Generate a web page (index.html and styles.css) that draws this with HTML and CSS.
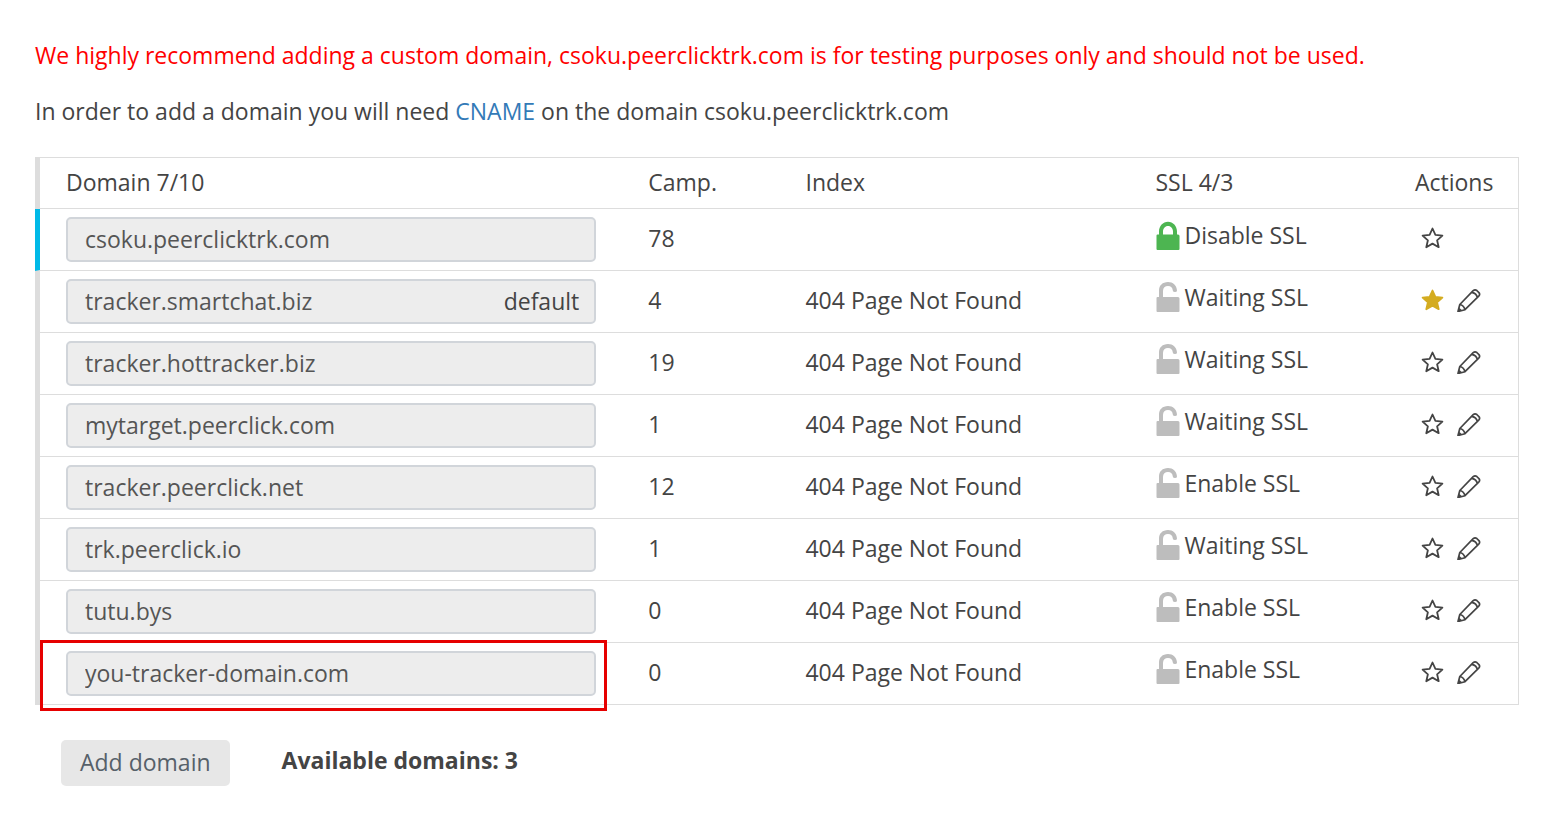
FILE: index.html
```html
<!DOCTYPE html>
<html lang="en">
<head>
<meta charset="utf-8">
<title>Domains</title>
<link rel="stylesheet" href="styles.css">
</head>
<body>
<svg class="sprite" aria-hidden="true">
  <symbol id="locked" viewBox="0 0 24 30"><path fill-rule="evenodd" d="M1.500 14.500H3V11.500C3 6 7 1.700 12 1.700S21 6 21 11.500v3h1q1.500 0 1.500 1.500V29q0 1-1 1h-21q-1 0-1-1V15.500q0-1 1-1zM7 14.500h10V11.500c0-3-2-5.500-5-5.500s-5 2.500-5 5.500z"/></symbol>
  <symbol id="unlocked" viewBox="0 0 24 30"><path d="M1.500 15H3V8.500C3 3.500 6.500 0 12 0c5 0 8.500 3 9 8.500q0 1.500-2 1.500t-2.200-1.500C16.500 5.500 15 4 12 4c-3 0-5 1.800-5 5v6h15q1.500 0 1.500 1.500V29q0 1-1 1h-21q-1 0-1-1V16q0-1 1-1z"/></symbol>
  <symbol id="star" viewBox="0 0 24 24"><path stroke-width="1.800" d="M11.500 2.500l2.900 6.400 7 .7-5.300 4.700 1.600 6.900L11.500 17.600l-6.200 3.600 1.600-6.900L1.600 9.600l7-.7z"/></symbol>
  <symbol id="pencil" viewBox="0 0 24 24"><path stroke-width="1.700" d="M1 23.500l1.800-7L16.200 2.700q1.800-1.700 3.600-.2l2.100 2.100q1.500 1.800-.2 3.600L8 21.700zM2.800 16.500q4.200 1 5.200 5.200M15 4.300q4.500 1 5.400 5.400M1.200 23l.8-2.500 2 2z"/></symbol>
</svg>
<main class="page">
  <p class="notice warning">We highly recommend adding a custom domain, csoku.peerclicktrk.com is for testing purposes only and should not be used.</p>
  <p class="notice">In order to add a domain you will need <a href="#cname">CNAME</a> on the domain csoku.peerclicktrk.com</p>
  <table class="domains">
    <colgroup><col class="col-domain"><col class="col-camp"><col class="col-index"><col class="col-ssl"><col></colgroup>
    <thead>
      <tr><th>Domain 7/10</th><th>Camp.</th><th>Index</th><th>SSL 4/3</th><th>Actions</th></tr>
    </thead>
    <tbody id="rows"></tbody>
  </table>
  <footer class="footer">
    <button class="add" type="button">Add domain</button>
    <strong>Available domains: 3</strong>
  </footer>
</main>
<script src="domains.js"></script>
</body>
</html>
```
FILE: styles.css
```css
* { box-sizing: border-box; }
body {
  margin: 0;
  background: #fff;
  color: #444;
  font: 23px/32px "Open Sans", "Noto Sans", sans-serif;
}
button, input { font: inherit; }
.sprite { display: none; }
.page { padding: 39px 28px 40px 35px; }
.notice { margin: 0 0 24px; }
.warning { color: #f00; }
a { color: #337ab7; text-decoration: none; }

.domains {
  width: 100%;
  margin-top: 30px;
  table-layout: fixed;
  border-collapse: separate;
  border-spacing: 0;
  border-top: 1px solid #ddd;
  border-right: 1px solid #ddd;
}
.col-domain { width: 39.6%; }
.col-camp { width: 10.6%; }
.col-index { width: 23.6%; }
.col-ssl { width: 17.5%; }
th, td {
  padding: 8px 0 12px 26px;
  border-bottom: 1px solid #ddd;
  text-align: left;
  vertical-align: middle;
  font-weight: 400;
  white-space: nowrap;
}
th { padding-bottom: 10px; }
th:first-child, td:first-child {
  padding-right: 26px;
  border-left: 5px solid #ddd;
}
td:first-child { padding-bottom: 8px; }
.primary td:first-child { border-left-color: #00b9e7; }

.field { position: relative; }
.field input {
  display: block;
  width: 100%;
  height: 45px;
  padding: 0 17px 2px;
  border: 2px solid #d1d5da;
  border-radius: 5px;
  background: #ededed;
  color: #555;
}
.badge {
  position: absolute;
  top: 6px;
  right: 17px;
}
.selected::after {
  content: "";
  position: absolute;
  inset: -11px -11px -15px -26px;
  border: 3px solid #e60000;
  pointer-events: none;
}

.ssl, .icon, .add {
  border: 0;
  background: none;
  color: inherit;
  cursor: pointer;
}
.ssl {
  display: flex;
  align-items: center;
  gap: 4px;
  padding: 0 0 6px 1px;
}
.lock { width: 24px; height: 30px; fill: #bdbdbd; }
.lock.on { fill: #4db551; }
.actions { display: flex; gap: 12px; padding-left: 6px; }
.icon { display: flex; padding: 0; }
.icon svg {
  width: 24px;
  height: 24px;
  fill: none;
  stroke: #444;
  stroke-linejoin: round;
}
.icon.active svg { fill: #d4ac20; stroke: #d4ac20; }

.footer {
  display: flex;
  gap: 52px;
  padding: 35px 26px 0;
}
.footer strong { padding-top: 4px; }
.add {
  height: 46px;
  padding: 0 19px 2px;
  border-radius: 5px;
  background: #e7e7e7;
  color: #566069;
}
```
FILE: domains.js
```js
const domains = [
  { name: 'csoku.peerclicktrk.com', camp: 78, index: '', ssl: 'Disable SSL', primary: true },
  { name: 'tracker.smartchat.biz', camp: 4, ssl: 'Waiting SSL', isDefault: true },
  { name: 'tracker.hottracker.biz', camp: 19, ssl: 'Waiting SSL' },
  { name: 'mytarget.peerclick.com', camp: 1, ssl: 'Waiting SSL' },
  { name: 'tracker.peerclick.net', camp: 12, ssl: 'Enable SSL' },
  { name: 'trk.peerclick.io', camp: 1, ssl: 'Waiting SSL' },
  { name: 'tutu.bys', camp: 0, ssl: 'Enable SSL' },
  { name: 'you-tracker-domain.com', camp: 0, ssl: 'Enable SSL', selected: true }
];

document.getElementById('rows').innerHTML = domains.map(d => `
  <tr class="${d.primary ? 'primary' : ''}">
    <td><div class="field ${d.selected ? 'selected' : ''}">
      <input type="text" readonly aria-label="Domain" value="${d.name}">
      ${d.isDefault ? '<span class="badge">default</span>' : ''}
    </div></td>
    <td>${d.camp}</td>
    <td>${d.index ?? '404 Page Not Found'}</td>
    <td><button class="ssl" type="button">
      <svg class="lock ${d.primary ? 'on' : ''}" aria-hidden="true"><use href="#${d.primary ? 'locked' : 'unlocked'}"/></svg>${d.ssl}
    </button></td>
    <td><div class="actions">
      <button class="icon ${d.isDefault ? 'active' : ''}" type="button" aria-label="Make default"><svg aria-hidden="true"><use href="#star"/></svg></button>
      ${d.primary ? '' : '<button class="icon" type="button" aria-label="Edit"><svg aria-hidden="true"><use href="#pencil"/></svg></button>'}
    </div></td>
  </tr>`).join('');
```
